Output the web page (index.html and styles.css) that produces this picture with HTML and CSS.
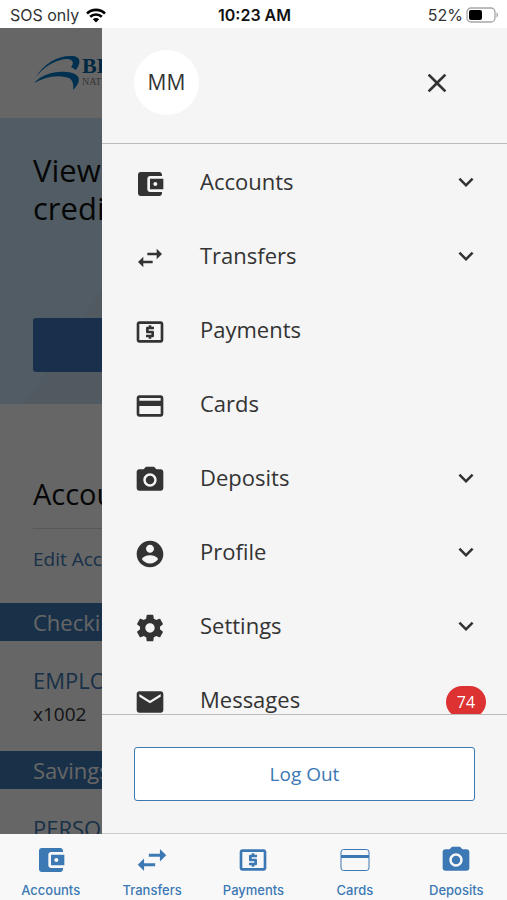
FILE: index.html
```html
<!DOCTYPE html>
<html lang="en">
<head>
    <meta charset="UTF-8">
    <meta name="viewport" content="width=device-width, initial-scale=1.0">
    <title>Accounts</title>
    <link rel="stylesheet" href="styles.css">
</head>
<body>
    <!-- shared icons -->
    <svg class="sprite" aria-hidden="true">
        <symbol id="wallet" viewBox="0 0 24 24"><path d="M21 18v1c0 1.100-.9 2-2 2H5c-1.110 0-2-.9-2-2V5c0-1.100.89-2 2-2h14c1.100 0 2 .9 2 2v1h-9c-1.110 0-2 .9-2 2v8c0 1.100.89 2 2 2h9zm-9-2h10V8H12v8zm4-2.500c-.83 0-1.500-.67-1.500-1.500s.67-1.500 1.500-1.500 1.500.67 1.500 1.500-.67 1.500-1.500 1.500z"/></symbol>
        <symbol id="transfer" viewBox="0 0 24 24"><path d="M6.990 11L3 15l3.990 4v-3H14v-2H6.990v-3zM21 9l-3.990-4v3H10v2h7.010v3L21 9z"/></symbol>
        <symbol id="payment" viewBox="0 0 24 24"><path d="M11 17h2v-1h1c.55 0 1-.45 1-1v-3c0-.55-.45-1-1-1h-3v-1h4V8h-2V7h-2v1h-1c-.55 0-1 .45-1 1v3c0 .55.45 1 1 1h3v1H9v2h2v1zm9-13H4c-1.110 0-1.990.89-1.990 2L2 18c0 1.110.89 2 2 2h16c1.110 0 2-.89 2-2V6c0-1.110-.89-2-2-2zm0 14H4V6h16v12z"/></symbol>
        <symbol id="card" viewBox="0 0 24 24"><path d="M20 4H4c-1.110 0-1.990.89-1.990 2L2 18c0 1.110.89 2 2 2h16c1.110 0 2-.89 2-2V6c0-1.110-.89-2-2-2zm0 14H4v-6h16v6zm0-10H4V6h16v2z"/></symbol>
        <symbol id="camera" viewBox="0 0 24 24"><circle cx="12" cy="12" r="3.200"/><path d="M9 2L7.170 4H4c-1.100 0-2 .9-2 2v12c0 1.100.9 2 2 2h16c1.100 0 2-.9 2-2V6c0-1.100-.9-2-2-2h-3.170L15 2H9zm3 15c-2.760 0-5-2.240-5-5s2.240-5 5-5 5 2.240 5 5-2.240 5-5 5z"/></symbol>
        <symbol id="profile" viewBox="0 0 24 24"><path d="M12 2C6.480 2 2 6.480 2 12s4.480 10 10 10 10-4.480 10-10S17.520 2 12 2zm0 3c1.660 0 3 1.340 3 3s-1.340 3-3 3-3-1.340-3-3 1.340-3 3-3zm0 14.200c-2.500 0-4.710-1.280-6-3.220.03-1.990 4-3.080 6-3.080 1.990 0 5.970 1.090 6 3.080-1.290 1.940-3.500 3.220-6 3.220z"/></symbol>
        <symbol id="gear" viewBox="0 0 24 24"><path d="M19.430 12.980c.04-.32.07-.64.07-.98s-.03-.66-.07-.98l2.110-1.650c.19-.15.24-.42.12-.64l-2-3.460c-.12-.22-.39-.3-.61-.22l-2.490 1c-.52-.4-1.080-.73-1.690-.98l-.38-2.650C14.460 2.180 14.250 2 14 2h-4c-.25 0-.46.18-.49.42l-.38 2.650c-.61.25-1.170.59-1.690.98l-2.490-1c-.23-.09-.49 0-.61.22l-2 3.460c-.13.22-.07.49.12.64l2.110 1.650c-.04.32-.07.65-.07.98s.03.66.07.98l-2.110 1.650c-.19.15-.24.42-.12.64l2 3.460c.12.22.39.3.61.22l2.490-1c.52.4 1.080.73 1.690.98l.38 2.650c.03.24.24.42.49.42h4c.25 0 .46-.18.49-.42l.38-2.650c.61-.25 1.170-.59 1.690-.98l2.490 1c.23.09.49 0 .61-.22l2-3.460c.12-.22.07-.49-.12-.64l-2.110-1.650zM12 15.500c-1.930 0-3.500-1.570-3.500-3.500s1.570-3.500 3.500-3.500 3.500 1.570 3.500 3.500-1.570 3.500-3.500 3.500z"/></symbol>
        <symbol id="mail" viewBox="0 0 24 24"><path d="M20 4H4c-1.100 0-1.990.9-1.990 2L2 18c0 1.100.9 2 2 2h16c1.100 0 2-.9 2-2V6c0-1.100-.9-2-2-2zm0 4l-8 5-8-5V6l8 5 8-5v2z"/></symbol>
        <symbol id="chevron" viewBox="0 0 24 24"><path d="M7.410 8.590L12 13.170l4.590-4.580L18 10l-6 6-6-6z"/></symbol>
        <symbol id="close" viewBox="0 0 24 24"><path d="M19 6.410L17.590 5 12 10.590 6.410 5 5 6.410 10.590 12 5 17.590 6.410 19 12 13.410 17.590 19 19 17.590 13.410 12z"/></symbol>
    </svg>

    <header class="status">
        <div class="status-left">
            <span>SOS only</span>
            <svg class="wifi" viewBox="0 0 20 15" aria-hidden="true">
                <path d="M1 5.500a13 13 0 0 1 18 0M4.200 8.800a8.300 8.300 0 0 1 11.600 0" fill="none" stroke="#000" stroke-width="2.600"/>
                <path d="M10 14.500l-3.200-3.300a4.600 4.600 0 0 1 6.400 0z"/>
            </svg>
        </div>
        <div class="status-time">10:23 AM</div>
        <div class="status-right">
            <span>52%</span>
            <svg class="battery" viewBox="0 0 33 16" aria-hidden="true">
                <rect x="1" y="1" width="28" height="14" rx="4" fill="none" stroke="#a6a6a6" stroke-width="1.300"/>
                <rect x="3" y="3" width="13" height="10" rx="2"/>
                <path d="M30.500 5.500c2 .6 2 4.400 0 5z" fill="#a6a6a6"/>
            </svg>
        </div>
    </header>

    <div class="stage">
        <main class="page">
            <div class="brand">
                <svg class="brand-mark" viewBox="0 0 46 36" aria-hidden="true">
                    <path d="M2 22C10 9 22 1 37 1c9 0 11 5 5 14l-5-3c4-5 1-8-5-8C20 5 9 13 2 22z"/>
                    <path d="M0 28c9-9 20-12 32-11 14 1 17 8 7 18 1-8-1-12-8-13-11-2-21 1-31 6z"/>
                </svg>
                <div class="brand-name">BR<small>NAT</small></div>
            </div>
            <section class="hero">
                <h1>View<br>credit</h1>
                <div class="hero-button"></div>
            </section>
            <section class="accounts">
                <h2>Accounts</h2>
                <a class="edit" href="#">Edit Accounts</a>
                <h3>Checking</h3>
                <div class="account">
                    <a href="#">EMPLOYEE</a>
                    <span>x1002</span>
                </div>
                <h3>Savings</h3>
                <div class="account">
                    <a href="#">PERSONAL</a>
                </div>
            </section>
        </main>
        <div class="scrim"></div>

        <aside class="drawer">
            <div class="drawer-head">
                <div class="avatar">MM</div>
                <button class="close" aria-label="Close menu"><svg class="icon"><use href="#close"/></svg></button>
            </div>
            <nav class="menu">
                <button class="menu-item"><svg class="icon"><use href="#wallet"/></svg><span class="label">Accounts</span><span class="extra"><svg class="chevron"><use href="#chevron"/></svg></span></button>
                <button class="menu-item"><svg class="icon"><use href="#transfer"/></svg><span class="label">Transfers</span><span class="extra"><svg class="chevron"><use href="#chevron"/></svg></span></button>
                <a class="menu-item" href="#"><svg class="icon"><use href="#payment"/></svg><span class="label">Payments</span></a>
                <a class="menu-item" href="#"><svg class="icon"><use href="#card"/></svg><span class="label">Cards</span></a>
                <button class="menu-item"><svg class="icon"><use href="#camera"/></svg><span class="label">Deposits</span><span class="extra"><svg class="chevron"><use href="#chevron"/></svg></span></button>
                <button class="menu-item"><svg class="icon"><use href="#profile"/></svg><span class="label">Profile</span><span class="extra"><svg class="chevron"><use href="#chevron"/></svg></span></button>
                <button class="menu-item"><svg class="icon"><use href="#gear"/></svg><span class="label">Settings</span><span class="extra"><svg class="chevron"><use href="#chevron"/></svg></span></button>
                <a class="menu-item" href="#"><svg class="icon"><use href="#mail"/></svg><span class="label">Messages</span><span class="extra badge">74</span></a>
            </nav>
            <div class="drawer-foot">
                <button class="logout">Log Out</button>
            </div>
        </aside>
    </div>

    <nav class="tabs">
        <a href="#"><svg class="icon"><use href="#wallet"/></svg>Accounts</a>
        <a href="#"><svg class="icon icon-wide"><use href="#transfer"/></svg>Transfers</a>
        <a href="#"><svg class="icon"><use href="#payment"/></svg>Payments</a>
        <a href="#">
            <svg class="icon" viewBox="0 0 32 32">
                <rect x="2" y="5.500" width="28" height="21" rx="2.500" fill="none" stroke="currentColor"/>
                <path d="M2 11h28v3H2z"/>
            </svg>Cards</a>
        <a href="#"><svg class="icon"><use href="#camera"/></svg>Deposits</a>
    </nav>
</body>
</html>
```
FILE: styles.css
```css
* {
    box-sizing: border-box;
}

body {
    margin: 0;
    height: 100vh;
    display: flex;
    flex-direction: column;
    overflow: hidden;
    font-family: "Open Sans", sans-serif;
    color: #333;
    background: #fff;
}

a {
    color: #3c78b4;
    text-decoration: none;
}

button {
    font: inherit;
    color: inherit;
    border: 0;
    background: none;
    padding: 0;
    cursor: pointer;
}

.sprite {
    position: absolute;
    width: 0;
    height: 0;
}

.icon {
    width: 32px;
    height: 32px;
    flex: none;
    fill: currentColor;
}

/* status bar */
.status {
    flex: none;
    display: grid;
    grid-template-columns: 1fr auto 1fr;
    align-items: center;
    height: 28px;
    padding: 2px 8px 0 10px;
    font-family: Inter, sans-serif;
    font-size: 16px;
    line-height: 24px;
}

.status-left,
.status-right {
    display: flex;
    align-items: center;
    gap: 7px;
}

.status-right {
    justify-content: flex-end;
    gap: 3px;
}

.status-time {
    font-weight: 600;
    color: #111;
}

.wifi {
    width: 20px;
    height: 15px;
}

.battery {
    width: 33px;
    height: 16px;
}

/* page behind the drawer */
.stage {
    position: relative;
    flex: 1;
    min-height: 0;
    overflow: hidden;
}

.page {
    height: 100%;
    overflow: hidden;
}

.brand {
    display: flex;
    align-items: center;
    gap: 2px;
    height: 90px;
    padding-left: 34px;
}

.brand-mark {
    width: 46px;
    height: 36px;
    fill: #0078c8;
}

.brand-name {
    padding-bottom: 4px;
    font-family: "Liberation Serif", serif;
    font-size: 22px;
    line-height: 22px;
    font-weight: bold;
    color: #0064a0;
}

.brand-name small {
    display: block;
    font-size: 10px;
    line-height: 10px;
    font-weight: normal;
    color: #888;
}

.hero {
    height: 286px;
    padding: 33px 33px 0;
    background: linear-gradient(124deg, #cae6fa 31%, #cadef2 31%);
}

.hero h1 {
    margin: 0 0 91px;
    font-size: 31px;
    line-height: 38px;
    font-weight: normal;
    color: #111;
}

.hero-button {
    height: 54px;
    border-radius: 3px;
    background: #3c78be;
}

.accounts h2 {
    margin: 0 33px;
    padding: 68px 0 12px;
    border-bottom: 1px solid #ddd;
    font-size: 29px;
    line-height: 44px;
    font-weight: normal;
    color: #111;
}

.edit {
    display: block;
    padding: 18px 33px 32px;
    font-size: 19px;
    line-height: 24px;
}

.accounts h3 {
    margin: 0;
    padding: 0 33px;
    font-size: 22px;
    line-height: 38px;
    font-weight: normal;
    color: #fff;
    background: #3c78b4;
}

.account {
    height: 110px;
    padding: 22px 33px 0;
    font-size: 19px;
    line-height: 34px;
}

.account a {
    display: block;
    font-size: 22px;
}

.scrim {
    position: absolute;
    inset: 0;
    background: rgba(0, 0, 0, 0.6);
}

/* drawer */
.drawer {
    position: absolute;
    top: 0;
    right: 0;
    bottom: 0;
    left: 102px;
    display: flex;
    flex-direction: column;
    background: #f5f5f5;
}

.drawer-head {
    flex: none;
    display: flex;
    align-items: center;
    justify-content: space-between;
    padding: 22px 54px 28px 32px;
    border-bottom: 1px solid #bbb;
}

.avatar {
    display: flex;
    align-items: center;
    justify-content: center;
    width: 65px;
    height: 65px;
    border-radius: 50%;
    padding-bottom: 2px;
    font-size: 21px;
    background: #fff;
}

.close {
    height: 32px;
}

.menu {
    flex: 1;
    min-height: 0;
    overflow: hidden;
}

.menu-item {
    display: flex;
    align-items: center;
    width: 100%;
    height: 74px;
    padding: 6px 21px 0 32px;
    font-size: 22px;
    line-height: 30px;
    text-align: left;
    color: #333;
}

.label {
    flex: 1;
    padding: 0 0 6px 34px;
}

.extra {
    display: flex;
    align-items: center;
    justify-content: center;
    width: 40px;
}

.chevron {
    width: 30px;
    height: 30px;
    margin-bottom: 4px;
    fill: currentColor;
}

.badge {
    height: 32px;
    border-radius: 16px;
    font-size: 16px;
    color: #fff;
    background: #dc3232;
}

.drawer-foot {
    flex: none;
    padding: 32px;
    border-top: 1px solid #bbb;
    border-bottom: 1px solid #ccc;
}

.logout {
    display: block;
    width: 100%;
    height: 54px;
    border: 1px solid #3c78b4;
    border-radius: 3px;
    font-size: 19px;
    color: #3c78b4;
    background: #fff;
}

/* bottom tabs */
.tabs {
    flex: none;
    display: grid;
    grid-template-columns: repeat(5, 1fr);
    height: 66px;
    padding-top: 10px;
    background: #f8f8f8;
}

.tabs a {
    display: flex;
    flex-direction: column;
    align-items: center;
    justify-content: space-between;
    font-family: Inter, sans-serif;
    font-size: 13px;
    line-height: 20px;
    font-weight: 500;
}

.tabs .icon-wide {
    width: 38px;
    height: 38px;
    margin: -3px 0;
}
```
